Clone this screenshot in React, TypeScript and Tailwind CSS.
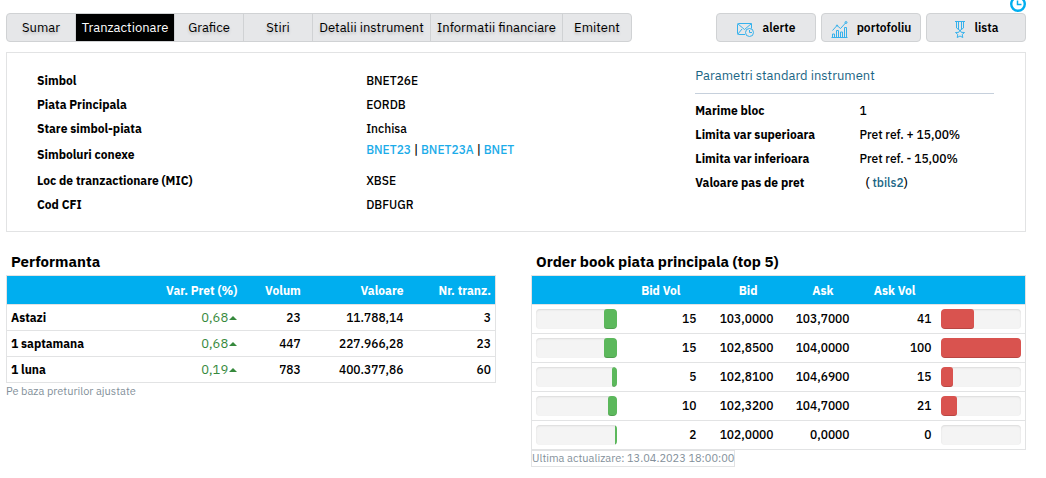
import type { ReactNode } from 'react'
import clsx from 'clsx'

interface Tab {
  label: string
  width: string
  active?: boolean
}

const TABS: Tab[] = [
  { label: 'Sumar', width: 'min-w-[69px]' },
  { label: 'Tranzactionare', width: 'min-w-[99px]', active: true },
  { label: 'Grafice', width: 'min-w-[69px]' },
  { label: 'Stiri', width: 'min-w-[69px]' },
  { label: 'Detalii instrument', width: 'min-w-[118px]' },
  { label: 'Informatii financiare', width: 'min-w-[132px]' },
  { label: 'Emitent', width: 'min-w-[68px]' },
]

const CONNECTED = ['BNET23', 'BNET23A', 'BNET']

const PERFORMANCE = [
  { period: 'Astazi', change: '0,68', volume: '23', value: '11.788,14', trades: '3' },
  { period: '1 saptamana', change: '0,68', volume: '447', value: '227.966,28', trades: '23' },
  { period: '1 luna', change: '0,19', volume: '783', value: '400.377,86', trades: '60' },
]

const ORDER_BOOK = [
  { bidVol: 15, bid: '103,0000', ask: '103,7000', askVol: 41 },
  { bidVol: 15, bid: '102,8500', ask: '104,0000', askVol: 100 },
  { bidVol: 5, bid: '102,8100', ask: '104,6900', askVol: 15 },
  { bidVol: 10, bid: '102,3200', ask: '104,7000', askVol: 21 },
  { bidVol: 2, bid: '102,0000', ask: '0,0000', askVol: 0 },
]

function ClockIcon() {
  return (
    <svg viewBox="0 0 16 16" className="size-4 flex-none text-[#00aeef]" fill="none" stroke="currentColor" strokeWidth="2.4" aria-hidden>
      <circle cx="8" cy="8" r="6.8" />
      <path d="M7.5 4.500V8.500H11.500" strokeWidth="1.500" />
    </svg>
  )
}

function AlertIcon() {
  return (
    <svg viewBox="0 0 17 14" className="w-[17px] h-3.5 flex-none" fill="none" stroke="#35b1ec" aria-hidden>
      <path d="M8 11.5H1.5a1 1 0 0 1-1-1v-9a1 1 0 0 1 1-1h13v5" />
      <path d="M.8.8 7.5 6.5 14.2.8M.8 11.2 5 6" />
      <circle cx="12.5" cy="9.5" r="4" />
      <path d="M12.5 7v2.5H15" />
    </svg>
  )
}

function PortfolioIcon() {
  return (
    <svg viewBox="0 0 17 17" className="size-[17px] flex-none" fill="none" stroke="#35b1ec" aria-hidden>
      <path d="M.5 16.5h16M1.5 16v-3h2v3M5.5 16V9.5h2V16M9.5 16v-5h2v5M13.5 16V6.5h2V16" />
      <path d="M1.5 9.5 6 4.5l3.5 3L15 1.5" />
      <circle cx="15" cy="1.5" r="1" />
      <circle cx="6" cy="4.5" r=".6" />
    </svg>
  )
}

function MedalIcon() {
  return (
    <svg viewBox="0 0 12 17" className="w-3 h-[17px] flex-none" fill="none" stroke="#35b1ec" aria-hidden>
      <path d="M1 .5h10M2.500.5v6.500L6 9.500 9.500 7V.5M4.500.5v7.500M7.500.5v7.500" />
      <path d="m6 9 1.200 2.300 3.300.2-2.300 2 .6 3L6 15l-2.800 1.500.6-3-2.300-2 3.300-.2z" />
    </svg>
  )
}

const ACTIONS: Array<{ label: string; Icon: () => ReactNode }> = [
  { label: 'alerte', Icon: AlertIcon },
  { label: 'portofoliu', Icon: PortfolioIcon },
  { label: 'lista', Icon: MedalIcon },
]

function Toolbar() {
  return (
    <div className="flex items-start justify-between">
      <nav className="flex h-[29px] rounded border border-[#d0d2d4] bg-[#e6e7e9] overflow-hidden" aria-label="Sectiuni">
        {TABS.map(({ label, width, active }) => (
          <a
            key={label}
            href="#"
            aria-current={active ? 'page' : undefined}
            className={clsx(
              'flex items-center justify-center whitespace-nowrap border-r border-[#d0d2d4] last:border-r-0',
              width,
              active
                ? 'bg-black text-white -my-px'
                : '[text-shadow:0_2px_3px_rgba(0,0,0,0.2)]',
            )}
          >
            {label}
          </a>
        ))}
      </nav>
      <div className="flex gap-[5px]">
        {ACTIONS.map(({ label, Icon }) => (
          <button
            key={label}
            type="button"
            className="flex items-center justify-center gap-[9px] w-[100px] h-[29px] rounded border border-[#d0d2d4] bg-[#e6e7e9] text-xs font-semibold"
          >
            <span className="pt-1">
              <Icon />
            </span>
            {label}
          </button>
        ))}
      </div>
    </div>
  )
}

function Row({ label, children }: { label: string; children: ReactNode }) {
  return (
    <tr className="h-6">
      <th scope="row" className="p-0 text-left font-bold">{label}</th>
      <td className="p-0 font-medium">{children}</td>
    </tr>
  )
}

function InstrumentCard() {
  return (
    <section className="mt-2.5 grid grid-cols-[659fr_299fr] border border-[#e2e3e4] pl-[30px] pr-[31px] pt-4 pb-3.5">
      <table className="table-fixed w-full self-start text-xs leading-[18px]">
        <colgroup>
          <col className="w-1/2" />
          <col />
        </colgroup>
        <tbody>
          <Row label="Simbol">BNET26E</Row>
          <Row label="Piata Principala">EORDB</Row>
          <Row label="Stare simbol-piata">Inchisa</Row>
          <tr className="h-7">
            <th scope="row" className="p-0 text-left font-bold">Simboluri conexe</th>
            <td className="p-0 align-top font-medium">
              {CONNECTED.map((symbol, i) => (
                <span key={symbol}>
                  {i > 0 && ' | '}
                  <a href="#" className="text-[#1cace9]">{symbol}</a>
                </span>
              ))}
            </td>
          </tr>
          <Row label="Loc de tranzactionare (MIC)">XBSE</Row>
          <Row label="Cod CFI">DBFUGR</Row>
        </tbody>
      </table>

      <div>
        <h2 className="h-[25px] border-b border-[#c6d0dc] leading-[14px] text-[#1a6585]">Parametri standard instrument</h2>
        <table className="mt-[5px] table-fixed w-full text-xs leading-[18px]">
          <colgroup>
            <col className="w-[55%]" />
            <col />
          </colgroup>
          <tbody>
            <Row label="Marime bloc">1</Row>
            <Row label="Limita var superioara">Pret ref. + 15,00%</Row>
            <Row label="Limita var inferioara">Pret ref. - 15,00%</Row>
            <Row label="Valoare pas de pret">
              <span className="pl-1.5">
                ( <a href="#" className="text-[#1a6585]">tbils2</a>)
              </span>
            </Row>
          </tbody>
        </table>
      </div>
    </section>
  )
}

function HeadCell({ children, wide }: { children: ReactNode; wide?: boolean }) {
  return (
    <th scope="col" className={clsx('p-0 pt-0.5 font-bold whitespace-nowrap', wide ? 'pr-[21px]' : 'pr-1')}>
      {children}
    </th>
  )
}

function Performance() {
  return (
    <section>
      <h2 className="h-[26px] pl-[5px] text-[15px] leading-[26px] font-bold">Performanta</h2>
      <table className="table-fixed w-full border-collapse border border-[#e2e3e4] text-right text-xs leading-[18px]">
        <colgroup>
          <col className="w-[30%]" />
          <col className="w-[18%]" />
          <col className="w-[13%]" />
          <col className="w-[21%]" />
          <col className="w-[18%]" />
        </colgroup>
        <thead className="bg-[#00aeef] text-white">
          <tr className="h-[29px]">
            <td />
            <HeadCell>Var. Pret (%)</HeadCell>
            <HeadCell>Volum</HeadCell>
            <HeadCell>Valoare</HeadCell>
            <HeadCell>Nr. tranz.</HeadCell>
          </tr>
        </thead>
        <tbody>
          {PERFORMANCE.map(row => (
            <tr key={row.period} className="h-[26px] border-t border-[#e2e3e4] font-medium">
              <th scope="row" className="p-0 pl-1 text-left font-bold">{row.period}</th>
              <td className="p-0 pr-1 text-[13px] font-normal text-[#36893c]">
                <span className="inline-flex items-center gap-px">
                  {row.change}
                  <svg viewBox="0 0 8 4" className="w-2 h-1" fill="currentColor" aria-hidden>
                    <path d="M4 0L8 4H0z" />
                  </svg>
                </span>
              </td>
              <td className="p-0 pr-1">{row.volume}</td>
              <td className="p-0 pr-1">{row.value}</td>
              <td className="p-0 pr-1">{row.trades}</td>
            </tr>
          ))}
        </tbody>
      </table>
      <p className="text-[11px] leading-4 text-[#83909a]">Pe baza preturilor ajustate</p>
    </section>
  )
}

function VolumeBar({ value, side }: { value: number; side: 'bid' | 'ask' }) {
  return (
    <div
      className={clsx(
        'flex h-5 rounded bg-[#f4f4f4] overflow-hidden shadow-[inset_0_1px_2px_rgba(0,0,0,0.1)]',
        side === 'bid' && 'justify-end',
      )}
    >
      <div
        className={clsx(
          'rounded-[3px] shadow-[inset_0_-1px_0_rgba(0,0,0,0.15)]',
          side === 'bid' ? 'bg-[#5cb85c]' : 'bg-[#d9534f]',
        )}
        style={{ width: `${value}%` }}
      />
    </div>
  )
}

function OrderBook() {
  return (
    <section>
      <h2 className="h-[26px] pl-[5px] text-[15px] leading-[26px] font-bold">Order book piata principala (top 5)</h2>
      <table className="table-fixed w-full border-collapse border border-[#e2e3e4] text-right text-xs leading-[18px]">
        <colgroup>
          <col />
          <col className="w-[81px]" />
          <col className="w-[77px]" />
          <col className="w-[76px]" />
          <col className="w-[82px]" />
          <col />
        </colgroup>
        <thead className="bg-[#00aeef] text-white">
          <tr className="h-[29px]">
            <td />
            <HeadCell wide>Bid Vol</HeadCell>
            <HeadCell wide>Bid</HeadCell>
            <HeadCell wide>Ask</HeadCell>
            <HeadCell wide>Ask Vol</HeadCell>
            <td />
          </tr>
        </thead>
        <tbody>
          {ORDER_BOOK.map(row => (
            <tr key={row.bid} className="h-[29px] border-t border-[#e2e3e4] font-medium">
              <td className="px-1 py-0"><VolumeBar value={row.bidVol} side="bid" /></td>
              <td className="p-0 pr-[5px]">{row.bidVol}</td>
              <td className="p-0 pr-[5px]">{row.bid}</td>
              <td className="p-0 pr-[5px]">{row.ask}</td>
              <td className="p-0 pr-[5px]">{row.askVol}</td>
              <td className="px-1 py-0"><VolumeBar value={row.askVol} side="ask" /></td>
            </tr>
          ))}
        </tbody>
      </table>
      <p className="w-fit border border-[#e2e3e4] text-[11px] leading-[15px] text-[#83909a]">
        Ultima actualizare: 13.04.2023 18:00:00
      </p>
    </section>
  )
}

export default function App() {
  return (
    <main className="bg-white pl-1.5 pr-5 font-['IBM_Plex_Sans',Roboto,sans-serif] text-[13px] leading-[18px] text-black">
      <div className="flex h-[13px] items-end justify-end overflow-hidden pb-px">
        <ClockIcon />
      </div>
      <Toolbar />
      <InstrumentCard />
      <div className="mt-[17px] grid grid-cols-[490fr_495fr] gap-[35px]">
        <Performance />
        <OrderBook />
      </div>
    </main>
  )
}
